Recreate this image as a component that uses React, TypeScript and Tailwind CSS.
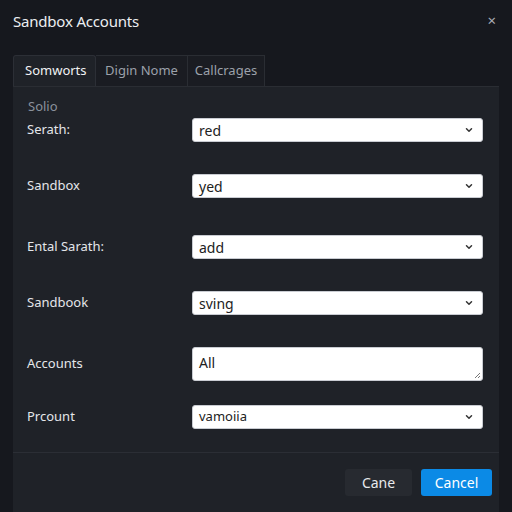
import React from "react";

const Chevron = () => (
  <svg width="10" height="10" viewBox="0 0 10 10" className="shrink-0">
    <path d="M2.5 3.8 L5 6.2 L7.5 3.8" fill="none" stroke="#333" strokeWidth="1.5" strokeLinecap="round" strokeLinejoin="round" />
  </svg>
);

function SelectBox({ value, small }: { value: string; small?: boolean }) {
  return (
    <div className={`w-[291px] h-[24px] bg-white rounded-[3px] border border-[#c9ccd2] flex items-center justify-between pl-[6px] pr-[8px] text-[#222] ${small ? "text-[13px]" : "text-[14px]"}`}>
      <span>{value}</span>
      <Chevron />
    </div>
  );
}

function Row({ label, children, mt }: { label: string; children: React.ReactNode; mt: string }) {
  return (
    <div className={`flex items-center ${mt}`}>
      <div className="w-[165px] text-[13px] text-[#e4e6ea]">{label}</div>
      {children}
    </div>
  );
}

export default function App() {
  return (
    <div
      className="w-[512px] h-[512px] bg-[#16181e] flex flex-col overflow-hidden"
      style={{ fontFamily: '"Noto Sans", "Open Sans", sans-serif' }}
    >
      <div className="h-[55px] flex justify-between pl-[13px] pr-[16px] pt-[10px]">
        <div className="text-[15px] text-[#eceef1] tracking-[-0.2px]">Sandbox Accounts</div>
        <div className="text-[15px] text-[#a9adb5] leading-none pt-[3px]">×</div>
      </div>
      <div className="flex ml-[13px] h-[31px] text-[13px]">
        <div className="w-[83px] bg-[#1f2228] border border-b-0 border-[#2c2f36] rounded-t-[3px] flex items-center pl-[11px] text-[#f1f2f4]">Somworts</div>
        <div className="w-[92px] bg-[#1a1c22] border-r border-t border-[#2a2d33] flex items-center justify-center text-[#9ca1aa]">Digin Nome</div>
        <div className="w-[77px] bg-[#1a1c22] border-r border-t border-[#2a2d33] flex items-center justify-center text-[#9ca1aa]">Callcrages</div>
      </div>
      <div className="flex-1 mx-[13px] bg-[#1f2228] border-t border-[#2a2d33] flex flex-col">
        <div className="px-[14px] pt-[10px] h-[365px]">
          <div className="text-[13px] text-[#8a919c] leading-[18px] ml-[1px]">Solio</div>
          <Row label="Serath:" mt="mt-[3px]"><SelectBox value="red" /></Row>
          <Row label="Sandbox" mt="mt-[32px]"><SelectBox value="yed" /></Row>
          <Row label="Ental Sarath:" mt="mt-[37px]"><SelectBox value="add" /></Row>
          <Row label="Sandbook" mt="mt-[32px]"><SelectBox value="sving" /></Row>
          <Row label="Accounts" mt="mt-[32px]">
            <div className="relative w-[291px] h-[34px] bg-white rounded-[3px] border border-[#c9ccd2] pl-[6px] pt-[4px] text-[14px] text-[#222]">
              All
              <svg width="7" height="7" viewBox="0 0 7 7" className="absolute right-[1px] bottom-[1px]">
                <path d="M6 1 L1 6 M6 4 L4 6" stroke="#777" strokeWidth="1" />
              </svg>
            </div>
          </Row>
          <Row label="Prcount" mt="mt-[24px]"><SelectBox value="vamoiia" small /></Row>
        </div>
        <div className="border-t border-[#2b2e35] flex-1 flex justify-end items-start pt-[16px] pr-[7px] gap-[9px]">
          <div className="w-[67px] h-[27px] rounded-[3px] bg-[#272a30] text-[#e8e9ec] text-[14px] flex items-center justify-center">Cane</div>
          <div className="w-[71px] h-[27px] rounded-[3px] bg-[#0b8ae6] text-white text-[14px] flex items-center justify-center">Cancel</div>
        </div>
      </div>
    </div>
  );
}
